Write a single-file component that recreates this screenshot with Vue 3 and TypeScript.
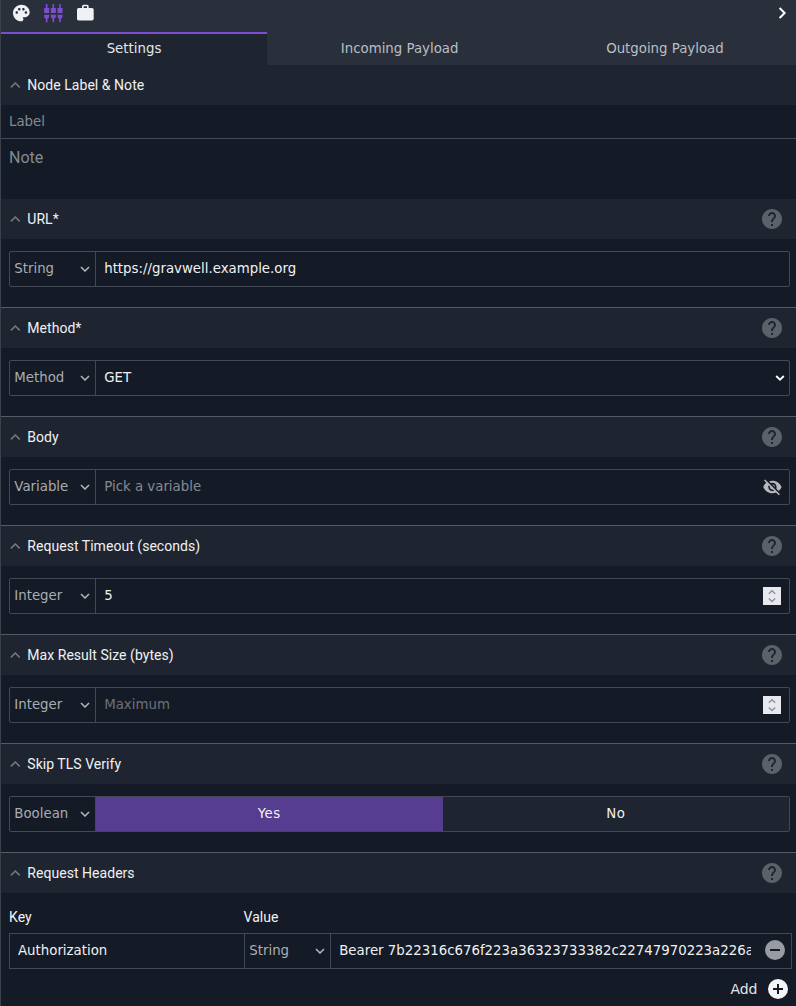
<script setup lang="ts">
import { ref } from 'vue'

type Kind = 'text' | 'select' | 'variable' | 'number' | 'toggle'

interface Section {
  title: string
  type: string
  kind: Kind
  value?: string
  placeholder?: string
}

const tabs: string[] = ['Settings', 'Incoming Payload', 'Outgoing Payload']
const activeTab = ref('Settings')
const skipVerify = ref(true)

const sections: Section[] = [
  { title: 'URL*', type: 'String', kind: 'text', value: 'https://gravwell.example.org' },
  { title: 'Method*', type: 'Method', kind: 'select', value: 'GET' },
  { title: 'Body', type: 'Variable', kind: 'variable', placeholder: 'Pick a variable' },
  { title: 'Request Timeout (seconds)', type: 'Integer', kind: 'number', value: '5' },
  { title: 'Max Result Size (bytes)', type: 'Integer', kind: 'number', placeholder: 'Maximum' },
  { title: 'Skip TLS Verify', type: 'Boolean', kind: 'toggle' },
]

const helpPath =
  'M12 2C6.48 2 2 6.48 2 12s4.48 10 10 10 10-4.48 10-10S17.52 2 12 2zm1 17h-2v-2h2v2zm2.07-7.75l-.9.92C13.45 12.9 13 13.5 13 15h-2v-.5c0-1.1.45-2.1 1.17-2.83l1.24-1.26c.37-.36.59-.86.59-1.41 0-1.1-.9-2-2-2s-2 .9-2 2H8c0-2.21 1.79-4 4-4s4 1.79 4 4c0 .88-.36 1.68-.93 2.25z'
</script>

<template>
  <div class="panel">
    <div class="grip"></div>
    <header class="top">
      <div class="toolbar">
        <svg class="icon20" viewBox="0 0 24 24"><path d="M12 2C6.49 2 2 6.49 2 12s4.49 10 10 10c1.38 0 2.5-1.12 2.5-2.5 0-.61-.23-1.2-.64-1.67-.08-.1-.13-.21-.13-.33 0-.28.22-.5.5-.5H16c3.31 0 6-2.69 6-6 0-4.96-4.49-9-10-9zm5.5 11c-.83 0-1.5-.67-1.5-1.5s.67-1.5 1.5-1.5 1.5.67 1.5 1.5-.67 1.5-1.5 1.5zm-3-4c-.83 0-1.5-.67-1.5-1.5S13.67 6 14.5 6s1.5.67 1.5 1.5S15.33 9 14.5 9zM5 11.5c0-.83.67-1.5 1.5-1.5s1.5.67 1.5 1.5S7.33 13 6.5 13 5 12.33 5 11.5zm6-4c0 .83-.67 1.5-1.5 1.5S8 8.33 8 7.5 8.67 6 9.5 6s1.5.67 1.5 1.5z" /></svg>
        <svg class="icon20 current" viewBox="0 0 24 24"><path d="M5 2c0-.55-.45-1-1-1s-1 .45-1 1v4H1v6h6V6H5V2zm4 14c0 1.3.84 2.4 2 2.82V23h2v-4.18c1.16-.41 2-1.51 2-2.82v-2H9v2zm-8 0c0 1.3.84 2.4 2 2.82V23h2v-4.18C6.16 18.4 7 17.3 7 16v-2H1v2zM21 6V2c0-.55-.45-1-1-1s-1 .45-1 1v4h-2v6h6V6h-2zm-8-4c0-.55-.45-1-1-1s-1 .45-1 1v4H9v6h6V6h-2V2zm4 14c0 1.3.84 2.4 2 2.82V23h2v-4.18c1.16-.41 2-1.51 2-2.82v-2h-6v2z" /></svg>
        <svg class="icon20" viewBox="0 0 24 24"><path d="M20 6h-4V4c0-1.11-.89-2-2-2h-4c-1.11 0-2 .89-2 2v2H4c-1.11 0-1.99.89-1.99 2L2 19c0 1.11.89 2 2 2h16c1.11 0 2-.89 2-2V8c0-1.11-.89-2-2-2zm-6 0h-4V4h4v2z" /></svg>
        <svg class="collapse" viewBox="0 0 8 12"><path d="M1 1l5 5-5 5" /></svg>
      </div>
      <nav class="tabs">
        <button v-for="t in tabs" :key="t" class="tab" :class="{ active: t === activeTab }" @click="activeTab = t">{{ t }}</button>
      </nav>
    </header>

    <div class="head">
      <svg class="caret" viewBox="0 0 10 6"><path d="M.6 5.4L5 1l4.4 4.4" /></svg>
      <span class="title">Node Label &amp; Note</span>
    </div>
    <div class="label-input">Label</div>
    <div class="note-input">Note</div>

    <section v-for="s in sections" :key="s.title" class="section">
      <div class="head">
        <svg class="caret" viewBox="0 0 10 6"><path d="M.6 5.4L5 1l4.4 4.4" /></svg>
        <span class="title">{{ s.title }}</span>
        <svg class="help" viewBox="0 0 24 24"><path :d="helpPath" /></svg>
      </div>
      <div class="field">
        <div class="type">
          <span>{{ s.type }}</span>
          <svg class="down" viewBox="0 0 10 6"><path d="M1 1l4 4 4-4" /></svg>
        </div>
        <div v-if="s.kind === 'toggle'" class="toggle">
          <button :class="{ on: skipVerify }" @click="skipVerify = true">Yes</button>
          <button :class="{ on: !skipVerify }" @click="skipVerify = false">No</button>
        </div>
        <div v-else class="value">
          <span v-if="s.value" class="text">{{ s.value }}</span>
          <span v-else class="text placeholder" :class="{ dim: s.kind === 'number' }">{{ s.placeholder }}</span>
          <svg v-if="s.kind === 'select'" class="down bright" viewBox="0 0 10 6"><path d="M1.2 1L5 4.7 8.8 1" /></svg>
          <svg v-if="s.kind === 'variable'" class="eye" viewBox="0 0 24 24"><path d="M12 7c2.76 0 5 2.24 5 5 0 .65-.13 1.26-.36 1.83l2.92 2.92c1.51-1.26 2.7-2.89 3.43-4.75-1.73-4.39-6-7.5-11-7.5-1.4 0-2.74.25-3.98.7l2.16 2.16C10.74 7.13 11.35 7 12 7zM2 4.27l2.28 2.28.46.46C3.08 8.3 1.78 10.02 1 12c1.73 4.39 6 7.5 11 7.5 1.55 0 3.03-.3 4.38-.84l.42.42L19.73 22 21 20.73 3.27 3 2 4.27zM7.53 9.8l1.55 1.55c-.05.21-.08.43-.08.65 0 1.66 1.34 3 3 3 .22 0 .44-.03.65-.08l1.55 1.55c-.67.33-1.41.53-2.2.53-2.76 0-5-2.24-5-5 0-.79.2-1.53.53-2.2zm4.31-.78l3.15 3.15.02-.16c0-1.66-1.34-3-3-3l-.17.01z" /></svg>
          <svg v-if="s.kind === 'number'" class="spin" viewBox="0 0 18 18"><rect width="18" height="18" /><path d="M5.8 6.7l3.2-3 3.2 3M5.8 11.6l3.2 3 3.2-3" /></svg>
        </div>
      </div>
    </section>

    <section class="section">
      <div class="head">
        <svg class="caret" viewBox="0 0 10 6"><path d="M.6 5.4L5 1l4.4 4.4" /></svg>
        <span class="title">Request Headers</span>
        <svg class="help" viewBox="0 0 24 24"><path :d="helpPath" /></svg>
      </div>
      <div class="columns"><span>Key</span><span>Value</span></div>
      <div class="pair">
        <div class="key">Authorization</div>
        <div class="type">
          <span>String</span>
          <svg class="down" viewBox="0 0 10 6"><path d="M1 1l4 4 4-4" /></svg>
        </div>
        <div class="value">
          <span class="text clip">Bearer 7b22316c676f223a36323733382c22747970223a226a</span>
          <svg class="round" viewBox="0 0 20 20"><circle cx="10" cy="10" r="10" /><path d="M5 10h10" /></svg>
        </div>
      </div>
      <div class="add">
        <span>Add</span>
        <svg class="round light" viewBox="0 0 20 20"><circle cx="10" cy="10" r="10" /><path d="M5 10h10M10 5v10" /></svg>
      </div>
    </section>
  </div>
</template>

<style>
body {
  background: #141b26;
}
</style>

<style scoped>
* {
  box-sizing: border-box;
}
.panel {
  position: relative;
  width: 796px;
  height: 1006px;
  overflow: hidden;
  border-left: 1px solid #3b414b;
  background: #141b26;
  color: #f0f1f4;
  font: 13.33px/18px "DejaVu Sans", sans-serif;
}
svg {
  display: block;
  flex: none;
}
button {
  border: 0;
  padding: 0;
  background: none;
  color: inherit;
  font: inherit;
}
.grip {
  position: absolute;
  left: -1px;
  top: 495px;
  width: 1px;
  height: 30px;
  background: repeating-linear-gradient(#e8e9ed 0 1px, #141b26 1px 2px);
}
.top {
  background: #2a303b;
}
.toolbar {
  display: flex;
  height: 32px;
  padding: 3px 9px 0 10px;
  gap: 12px;
}
.icon20 {
  width: 20px;
  height: 20px;
  overflow: visible;
  fill: #f0f1f5;
}
.icon20 path {
  transform: translateX(0.4px);
}
.icon20.current {
  fill: #7c4dd0;
}
.collapse {
  width: 8px;
  height: 12px;
  margin: 4px 0 0 auto;
  fill: none;
  stroke: #fff;
  stroke-width: 2;
}
.collapse path {
  transform: translateX(-0.4px);
}
.tabs {
  display: grid;
  grid-template-columns: 266px 265.3px 265.3px;
  height: 33px;
}
.tab {
  border-top: 2px solid transparent;
  color: #bbbec4;
  padding-bottom: 2px;
}
.tab.active {
  border-top-color: #7c4dd0;
  background: #1f2530;
  color: #e4e5e8;
}
.head {
  display: flex;
  align-items: center;
  height: 40px;
  padding: 0 12px 0 9.3px;
  background: #1f2530;
  font: 14px/20px Roboto, sans-serif;
  letter-spacing: 0.04px;
}
.caret {
  width: 10px;
  height: 6px;
  margin-right: 7px;
  overflow: visible;
  fill: none;
  stroke: #747983;
  stroke-width: 1.5;
}
.caret path {
  transform: translateX(0.3px);
}
.help {
  width: 24px;
  height: 24px;
  margin-left: auto;
  fill: #5c6169;
}
.label-input {
  height: 34px;
  padding: 8px 8px 7px;
  border-bottom: 1px solid #444a55;
  color: #868a92;
}
.note-input {
  height: 60px;
  padding: 8px;
  color: #868a92;
  font: 16px/21px Roboto, sans-serif;
}
.section {
  height: 109px;
  border-bottom: 1px solid #555b65;
}
.section:last-child {
  height: auto;
  border-bottom: 0;
}
.field {
  display: flex;
  height: 36px;
  margin: 12px 6px 0 8px;
  border: 1px solid #434954;
  border-radius: 2px;
}
.type {
  display: flex;
  align-items: center;
  justify-content: space-between;
  width: 86px;
  padding: 0 5px 0 4.3px;
  border-right: 1px solid #434954;
  color: #a9acb2;
}
.down {
  width: 10px;
  height: 6px;
  fill: none;
  stroke: #b4b7bd;
  stroke-width: 1.5;
}
.down.bright {
  margin: 0 -3px 0 0;
  stroke: #fff;
  stroke-width: 1.8;
}
.value {
  display: flex;
  flex: 1;
  align-items: center;
  justify-content: space-between;
  min-width: 0;
  padding: 0 7px 0 8.2px;
}
.placeholder {
  color: #868a92;
}
.placeholder.dim {
  color: #6c717a;
}
.eye {
  width: 20px;
  height: 20px;
  overflow: visible;
  fill: #b6b8bd;
}
.eye path {
  transform: translateX(0.5px);
}
.spin {
  width: 18px;
  height: 18px;
  margin-right: 1px;
}
.spin rect {
  fill: #e9e9ed;
}
.spin path {
  fill: none;
  stroke: #8f8f9d;
  stroke-width: 1.4;
}
.toggle {
  display: grid;
  flex: 1;
  grid-template-columns: 1fr 1fr;
  background: #1f2530;
}
.toggle button {
  letter-spacing: 0.5px;
}
.toggle .on {
  background: #563d8f;
}
.columns {
  display: grid;
  grid-template-columns: 234.5px 1fr;
  padding: 14px 8px 6px;
  font: 14px/20px Roboto, sans-serif;
  letter-spacing: 0.04px;
}
.pair {
  display: flex;
  height: 36px;
  margin: 0 4px 0 8px;
  border: 1px solid #434954;
}
.key {
  width: 235px;
  padding: 8px;
  border-right: 1px solid #434954;
}
.clip {
  width: 412px;
  overflow: hidden;
  white-space: nowrap;
}
.pair .value {
  padding-right: 6px;
}
.round {
  width: 20px;
  height: 20px;
  fill: #989ba4;
  stroke: none;
}
.pair .round {
  margin-bottom: 2px;
}
.round path {
  stroke: #141b26;
  stroke-width: 2;
}
.round.light {
  fill: #f4f5f8;
}
.add {
  display: flex;
  align-items: center;
  justify-content: flex-end;
  gap: 10.5px;
  padding: 10px 8px 0 0;
  color: #e4e5e8;
}
.add span {
  font-size: 14px;
}
</style>
